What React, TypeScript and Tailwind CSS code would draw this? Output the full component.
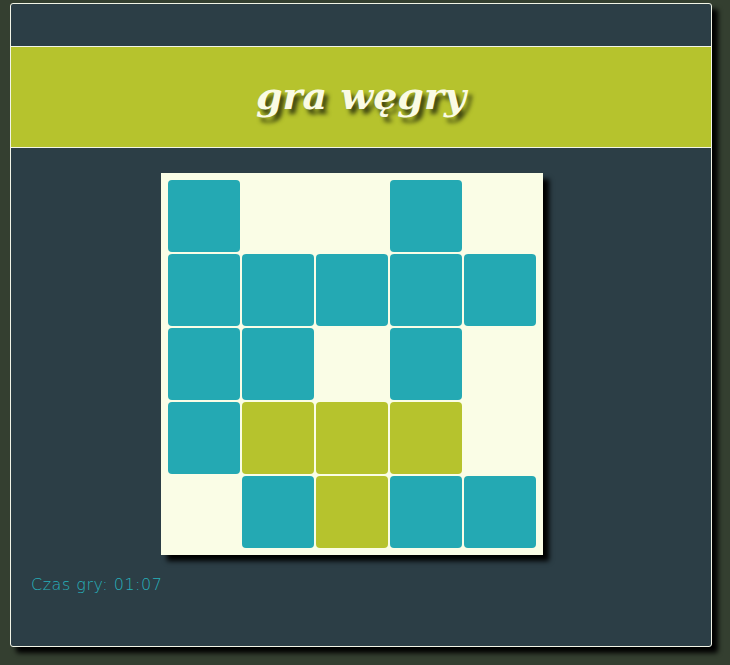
const grid = [
  'T..T.',
  'TTTTT',
  'TT.T.',
  'TGGG.',
  '.TGTT',
]

function Tile({ kind }: { kind: string }) {
  if (kind === 'T') return <div className="h-[72px] w-[72px] rounded-[4px] bg-[#24a9b3]" />
  if (kind === 'G') return <div className="h-[72px] w-[72px] rounded-[4px] bg-[#b6c32d]" />
  return <div className="h-[72px] w-[72px]" />
}

export default function App() {
  return (
    <div className="h-[665px] w-[730px] overflow-hidden bg-[#343f30] pl-[10px] pt-[3px]">
      <div className="flex h-[644px] w-[702px] flex-col rounded-[3px] border border-[#f2f4e6] bg-[#2c3e46] shadow-[6px_6px_5px_#000]">
        <div className="h-[42px]" />
        <div className="flex h-[102px] items-center justify-center border-y border-[#f2f4e6] bg-[#b6c32d] pb-[2px]">
          <h1
            className="text-[38px] font-bold italic leading-none text-[#fafbe4] [text-shadow:4px_5px_4px_#3d4410]"
            style={{ fontFamily: '"DejaVu Serif", Georgia, serif' }}
          >
            gra węgry
          </h1>
        </div>
        <div className="ml-[150px] mt-[25px] grid w-[382px] grid-cols-5 gap-[2px] bg-[#fafde6] p-[7px] shadow-[6px_6px_5px_#000]">
          {grid.flatMap((row, r) =>
            row.split('').map((c, i) => <Tile key={`${r}-${i}`} kind={c} />),
          )}
        </div>
        <p
          className="ml-[20px] mt-[18px] text-[16px] font-extralight tracking-[0.5px] text-[#27b0bb]"
          style={{ fontFamily: '"DejaVu Sans", sans-serif' }}
        >
          Czas gry: 01:07
        </p>
      </div>
    </div>
  )
}
